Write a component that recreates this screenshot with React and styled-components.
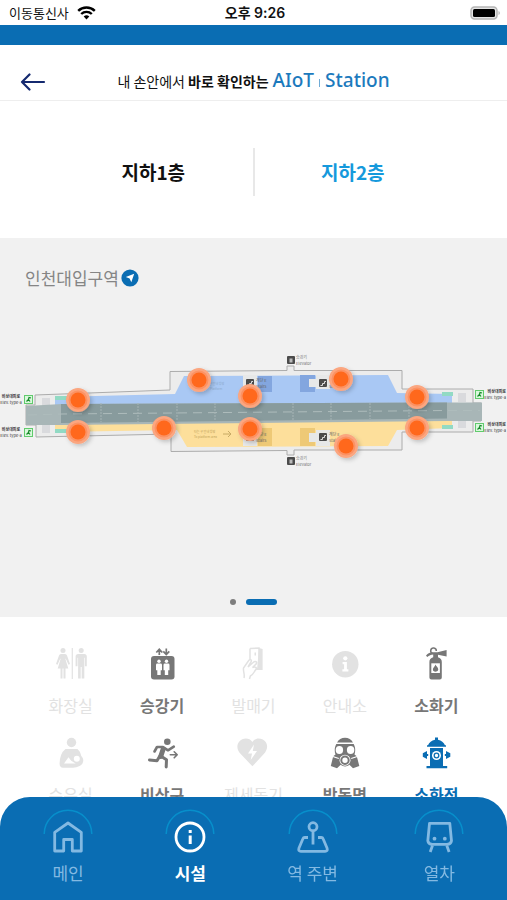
import React, { useState } from "react";
import styled, { createGlobalStyle } from "styled-components";

const colors = {
  brand: "#0a6db3",
  sky: "#1599dc",
  ink: "#111111",
  gray: "#777777",
  faint: "#e2e2e2",
  panel: "#f1f1f1",
  navMuted: "#83b9e2",
};

const GlobalStyle = createGlobalStyle`
  *, *::before, *::after { box-sizing: border-box; }
  body {
    margin: 0;
    background: #ffffff;
    color: ${colors.ink};
    font-family: "Noto Sans", "Noto Sans CJK KR", sans-serif;
  }
  button {
    border: 0;
    padding: 0;
    background: none;
    color: inherit;
    font: inherit;
    cursor: pointer;
  }
  svg { display: block; }
`;

const Screen = styled.div`
  display: flex;
  flex-direction: column;
  min-height: 100vh;
`;

const StatusBar = styled.div`
  display: grid;
  grid-template-columns: 1fr auto 1fr;
  align-items: center;
  height: 25px;
  padding: 0 6px 0 9px;
  font-family: Inter, "Noto Sans CJK KR", sans-serif;
  font-size: 13px;
  line-height: 20px;
`;

const Carrier = styled.div`
  display: flex;
  align-items: center;
  gap: 8px;
`;

const Clock = styled.time`
  font-size: 14px;
  font-weight: 600;
`;

const Battery = styled.div`
  justify-self: end;
`;

const BrandStrip = styled.div`
  height: 20px;
  background: ${colors.brand};
`;

const Header = styled.header`
  display: grid;
  grid-template-columns: 28px 1fr 28px;
  align-items: center;
  height: 56px;
  padding: 16px 19px 0;
  border-bottom: 1px solid #eeeeee;
`;

const Title = styled.h1`
  display: flex;
  justify-content: center;
  align-items: baseline;
  gap: 4px;
  margin: 0;
  font-family: "Noto Sans CJK KR", sans-serif;
  font-size: 14px;
  font-weight: 400;
  line-height: 24px;
  white-space: nowrap;
`;

const Brand = styled.span`
  display: flex;
  align-items: baseline;
  gap: 5px;
  color: #1c7abd;
  font-family: "Noto Sans", sans-serif;
  font-size: 19px;
  font-weight: 500;
`;

const BrandRule = styled.span`
  width: 1px;
  height: 8px;
  background: #6fabd6;
`;

const Floors = styled.div`
  display: grid;
  grid-template-columns: 1fr 1fr;
  padding: 47px 56px 42px 54px;
`;

const Floor = styled.button`
  height: 48px;
  color: ${(p) => (p.$active ? colors.sky : colors.ink)};
  font-family: "Noto Sans CJK KR", sans-serif;
  font-size: 19px;
  font-weight: 700;
  line-height: 24px;

  & + & {
    border-left: 2px solid #e8e8e8;
  }
`;

const MapPanel = styled.section`
  display: flex;
  flex-direction: column;
  padding: 28px 0 12px;
  background: ${colors.panel};
`;

const StationName = styled.h2`
  display: flex;
  align-items: center;
  gap: 2px;
  margin: 0 25px 55px;
  color: #858585;
  font-family: "Noto Sans CJK KR", sans-serif;
  font-size: 17px;
  font-weight: 400;
  line-height: 24px;
`;

const PlanDrawing = styled.svg`
  width: 100%;
  height: auto;
  margin-bottom: 124px;
`;

const Pager = styled.div`
  display: flex;
  justify-content: center;
  align-items: center;
  gap: 10px;
`;

const PagerDot = styled.button`
  width: ${(p) => (p.$active ? 31 : 6)}px;
  height: 6px;
  border-radius: 3px;
  background: ${(p) => (p.$active ? colors.brand : "#7d7d7d")};
`;

const Facilities = styled.section`
  display: grid;
  grid-template-columns: repeat(5, 1fr);
  row-gap: 15px;
  padding: 27px 25px 72px;
`;

const facilityColor = { faint: colors.faint, on: colors.gray, selected: colors.brand };

const Facility = styled.button`
  display: flex;
  flex-direction: column;
  align-items: center;
  gap: 8px;
  color: ${(p) => facilityColor[p.$state]};
  font-family: "Noto Sans CJK KR", sans-serif;
  font-size: 16px;
  font-weight: ${(p) => (p.$state === "faint" ? 400 : 700)};
  line-height: 26px;
`;

const Nav = styled.nav`
  position: fixed;
  right: 0;
  bottom: 0;
  left: 0;
  display: grid;
  grid-template-columns: repeat(3, 122fr) 131fr;
  height: 103px;
  padding: 12px 2px 0 7px;
  border-radius: 30px 30px 0 0;
  background: ${colors.brand};
`;

const NavItem = styled.button`
  display: flex;
  flex-direction: column;
  align-items: center;
  gap: 4px;
  height: 78px;
  color: ${(p) => (p.$active ? "#ffffff" : colors.navMuted)};
  font-family: "Noto Sans CJK KR", sans-serif;
  font-size: 17px;
  font-weight: ${(p) => (p.$active ? 700 : 400)};
  line-height: 24px;
`;

const WifiIcon = () => (
  <svg width="19" height="14" viewBox="0 0 19 14" fill="none" stroke="#000" strokeWidth="2.4">
    <path d="M1.2 4.9a11.8 11.8 0 0 1 16.6 0" />
    <path d="M4.2 8a7.6 7.6 0 0 1 10.6 0" />
    <path d="M9.5 13.6 6.7 10.6a4 4 0 0 1 5.6 0z" fill="#000" stroke="none" />
  </svg>
);

const BatteryIcon = () => (
  <svg width="31" height="14" viewBox="0 0 31 14">
    <rect x="1" y="1" width="26" height="12" rx="3.5" fill="#e4e4e4" stroke="#b5b5b5" strokeWidth="1.5" />
    <rect x="3" y="3" width="22" height="8" rx="1.5" fill="#000" />
    <path d="M28.500 5c1.800.6 1.800 3.400 0 4z" fill="#b5b5b5" />
  </svg>
);

const BackIcon = () => (
  <svg width="28" height="20" viewBox="0 0 28 20" fill="none" stroke="#14296f" strokeWidth="2.200" strokeLinecap="round" strokeLinejoin="round">
    <path d="M25 11H3M10.500 3.500 3 11l7.500 7.500" />
  </svg>
);

const LocateIcon = () => (
  <svg width="18" height="18" viewBox="0 0 18 18">
    <circle cx="9" cy="9" r="8.600" fill={colors.brand} />
    <path d="M13.200 4.800 10.300 13.200 8.600 9.500 4.800 7.900z" fill="#fff" />
  </svg>
);

const Glyph = ({ children }) => (
  <svg width="40" height="40" viewBox="0 0 40 40" fill="currentColor" aria-hidden="true">
    {children}
  </svg>
);

const glyphs = {
  restroom: (
    <Glyph>
      <circle cx="12" cy="6.600" r="2.500" />
      <path d="M10 10h4q1.500 0 2 1.600l3 8.400-1.500.7-2.800-6.200-.3.500 2.900 9.600h-2.800V34.500h-2V24.600h-1V34.500h-2V24.600H6.700l2.900-9.600-.3-.5-2.800 6.200-1.500-.7 3-8.400Q8.500 10 10 10z" />
      <path d="M20.700 4h1.200v31h-1.200z" />
      <circle cx="30.200" cy="6.600" r="2.500" />
      <path d="M27.200 10h6q2.600 0 2.600 2.600v9.600h-1.900v-8.400h-.6V34.500h-2.600V23h-1v11.500h-2.600V13.800h-.6v8.400h-1.900v-9.600Q24.600 10 27.200 10z" />
    </Glyph>
  ),
  elevator: (
    <Glyph>
      <path d="M17.300 11V5.500m-3 3 3-3.200 3 3.200M24.300 4.500v5.800m-3-3 3 3.200 3-3.200" fill="none" stroke="currentColor" strokeWidth="1.700" />
      <rect x="9" y="12" width="23.500" height="23.500" rx="3" />
      <g fill="#fff">
        <circle cx="17" cy="17.300" r="1.700" />
        <path d="M15.300 19.600h3.400q1.300 0 1.300 1.300v5.300h-1.300V31h-3.400v-4.800H14v-5.300q0-1.300 1.300-1.300z" />
        <circle cx="24.500" cy="17.300" r="1.700" />
        <path d="M22.800 19.600h3.400q1.300 0 1.300 1.300v5.300h-1.300V31h-3.400v-4.800h-1.300v-5.300q0-1.300 1.300-1.300z" />
      </g>
    </Glyph>
  ),
  ticket: (
    <Glyph>
      <path d="M17 4.500 26 4v20l-3 1.500M17 4.500V15M11 34c1-4-1-6-.5-10l5.200-7.500c2-2 3.300-.3 2.300 1.500l-3 5 6-5.200c2.400-1 3.400.9 2 2.300l-3.500 3.400c3.500-1.500 4.500.6 3.300 2-2 2.600-2.500 5.500-5.500 6.500l-.8 3" fill="none" stroke="currentColor" strokeWidth="1.500" />
      <path d="m26 4 3.600 1v21L24 26z" />
      <path d="M21.500 8.500h1.500v3h-1.500z" />
    </Glyph>
  ),
  info: (
    <Glyph>
      <circle cx="20.300" cy="20.200" r="13.200" />
      <g fill="#fff">
        <circle cx="20.300" cy="14.300" r="2.100" />
        <path d="M17.600 18h4.300v7.300h1.500v2.200h-6v-2.200h1.700v-5h-1.500z" />
      </g>
    </Glyph>
  ),
  extinguisher: (
    <Glyph>
      <path d="M16.800 9.500a2.800 2.800 0 1 1 3.500-2.500" fill="none" stroke="currentColor" strokeWidth="1.500" />
      <path d="M10 11.500c2-2.500 4-3.300 7-3.300h4.500L30.600 6v6.500l-8.600-1.800v2.600c2.500.7 3.800 2.300 3.800 4.700v15.500q0 2-2 2h-8.400q-2 0-2-2V18c0-2.400 1.300-4 3.800-4.700v-2.800c-2.300.1-3.900.9-6 2.500z" />
      <path d="M15.300 19.300h8.600v9.700h-8.600z" fill="#fff" />
      <path d="M19.600 20.600c.3 2 2.700 2.600 2.700 5q0 2.100-2.700 2.100t-2.700-2.100c0-1.800 1.700-2.500 2.700-5z" />
    </Glyph>
  ),
  nursing: (
    <Glyph>
      <circle cx="20.500" cy="9.500" r="4.700" />
      <path d="M14.500 16h12q3.500 3 3.800 7a6 6 0 0 1-1.800 10q-3 1.800-6.500 1.800H12q-3.600-.4-3.400-4.500.3-10 5.900-14.300z" />
      <path d="m13 30.500 4.500-6.300 2.700 3.500 4.500 2.800z" fill="#fff" />
      <circle cx="25.800" cy="25.800" r="3" fill="#fff" />
    </Glyph>
  ),
  exit: (
    <Glyph>
      <circle cx="25.300" cy="8.700" r="3.300" />
      <g fill="none" stroke="currentColor" strokeLinecap="round" strokeLinejoin="round">
        <path d="M12.500 18.500 15 14h6l5 3.300 5.800-3.600" strokeWidth="2.600" />
        <path d="m21.200 16-2.500 7.500" strokeWidth="5" />
        <path d="m19.500 23.500 5 3.300-.3 7.200M17.500 23.500l-2.500 4.300-7.500-.8" strokeWidth="3" />
        <path d="M28.300 21.800H35m-2.800-3 3 3-3 3" strokeWidth="1.600" />
      </g>
    </Glyph>
  ),
  aed: (
    <Glyph>
      <path d="M19.400 9C22 4.300 29 4.500 32.300 8.500c3.200 4 1.800 9-1.300 12.300L19.400 33.300 7.500 20.800C4.300 17.500 3 12.500 6.300 8.500 9.500 4.500 16.500 4.300 19.400 9z" />
      <path d="m21 11.500-6 9h4l-1.300 6.500 6.300-9h-4.200z" fill="#fff" />
    </Glyph>
  ),
  mask: (
    <Glyph>
      <path d="M12 9.500C13.500 6.500 16.500 4.700 20 4.700s6.500 1.800 8 4.800z" />
      <path d="M11.300 11h17.400c1.700 3 2 7 .8 10.500l2.300 1.700 2.500 9.800-6.300 2.300-3.600-3.500c-2.700 2.200-6 2.200-8.700 0L12 35.300 5.800 33l2.400-9.800 2.300-1.700C9.200 18 9.600 14 11.300 11z" />
      <g fill="#fff">
        <ellipse cx="14.400" cy="17" rx="3.700" ry="3.900" />
        <ellipse cx="25.600" cy="17" rx="3.700" ry="3.900" />
        <circle cx="20" cy="27.200" r="5.500" />
        <path d="m8 23 6 2-.4 1L7.600 24zM32 23l-6 2 .4 1 6-2z" />
      </g>
      <circle cx="20" cy="27.200" r="3.700" fill="none" stroke="currentColor" strokeWidth="2" />
    </Glyph>
  ),
  hydrant: (
    <Glyph>
      <path d="M19 4.500h3v2.200c3.500.8 5.700 2.600 7 5.600h1v1.500H11v-1.500h1c1.300-3 3.500-4.800 7-5.600zM14 15h13v18H14zM10.500 33h20.700v2.200H10.500zM6.800 20.300 11 18v8l-4.200-2.300zM11 21h1.200v2H11zM34.300 20.300 30 18v8l4.300-2.300zM28.800 21H30v2h-1.200z" />
      <circle cx="20.500" cy="22.500" r="4.500" fill="#fff" />
      <circle cx="20.500" cy="22.500" r="2.300" fill="none" stroke="currentColor" strokeWidth="1.300" />
    </Glyph>
  ),
};

const NavGlyph = ({ children }) => (
  <svg width="50" height="48" viewBox="0 0 50 48" fill="none" aria-hidden="true">
    <path d="M1.200 25a23.800 23.800 0 0 1 47.600 0" stroke="#078fcb" strokeWidth="1.500" />
    <g stroke="currentColor" strokeWidth="2.800" strokeLinejoin="round">{children}</g>
  </svg>
);

const navGlyphs = {
  home: (
    <NavGlyph>
      <path d="M11.700 42V23.300L25 14l13.300 9.300V42h-9V30.500h-8.600V42z" />
    </NavGlyph>
  ),
  facility: (
    <NavGlyph>
      <circle cx="25" cy="28" r="14" />
      <path d="M25.200 26.500V35M25.200 21v3" strokeWidth="3" />
    </NavGlyph>
  ),
  around: (
    <NavGlyph>
      <circle cx="25" cy="17.700" r="4" />
      <path d="M25 21.700V35.500M20 28.500h-3.300q-1.300 0-1.800 1.300l-4 9.500q-.9 3 2 3h24.200q2.900 0 2-3l-4-9.500q-.5-1.300-1.800-1.300H30" />
    </NavGlyph>
  ),
  train: (
    <NavGlyph>
      <path d="M15.500 14.300h20.300l1.700 17.500q-.5 3.500-4.500 3.500H18.300q-4 0-4.500-3.500z" />
      <path d="m18.500 36.500-2.300 6.500M32.800 36.500l2.300 6.500" />
      <g fill="currentColor" stroke="none">
        <circle cx="20.500" cy="29.700" r="1.900" />
        <circle cx="30.800" cy="29.700" r="1.900" />
      </g>
    </NavGlyph>
  ),
};

const hydrants = [
  [199, 380], [341, 379], [78, 400], [250, 396], [417, 397],
  [78, 432], [164, 428], [250, 429], [417, 428], [346, 446],
];

const exits = [
  { x: 24, y: 395, label: 11, anchor: "middle" },
  { x: 24, y: 428, label: 11, anchor: "middle" },
  { x: 475, y: 390, label: 506, anchor: "end" },
  { x: 475, y: 423, label: 506, anchor: "end" },
];

const lifts = [[287, 356], [287, 457]];
const stairs = [[246, 379], [319, 379], [246, 433], [319, 433]];

const StationPlan = () => (
  <PlanDrawing viewBox="0 345 507 130" role="img" aria-label="인천대입구역 지하2층 소화전 위치" fontFamily="Noto Sans CJK KR, sans-serif">
    <defs>
      <filter id="pinShadow" x="-50%" y="-50%" width="200%" height="200%">
        <feDropShadow dx="2" dy="2" stdDeviation="2" floodColor="#000" floodOpacity="0.200" />
      </filter>
    </defs>
    <path
      d="M26 405H35V395L170 390V371.500L287 370.500V366H294V370.500H402V389H473V403H481V421H473V432H402V450H294V455H287V450.500L171 451.500V434L36 437V425H26Z"
      fill="#ececec" stroke="#acacac" strokeWidth="1"
    />
    <path d="M42 398h8v9h-8zM42 424h8v9h-8zM458 393h8v9h-8zM458 420h8v8h-8z" fill="#d9dadd" />
    <path d="M55 397 175 394 184 376 388 375 397 393 452 394V404L55 406Z" fill="#a9c8f4" />
    <path d="M55 422 452 418V428L397 430 388 446 187 447 177 430 55 432Z" fill="#fddf9b" />
    <path d="M55 396h13v4H55zM55 429h13v4H55zM442 392h11v4h-11zM442 425h11v4h-11z" fill="#92dac4" />
    <path d="M26 406 62 404 447 402.500H482V421H447L62 425 26 425Z" fill="#a8b6b7" />
    <path d="M61 404 447 402.500V418.500L61 423Z" fill="#889b9d" />
    <path d="M28 415 62 414 447 410.500H480" fill="none" stroke="#aebcbc" strokeWidth="1" strokeDasharray="9 6" />
    <path d="M101 403v19M138 403v19M177 403v18M215 403v18M293 403v17M331 403v17M370 403v16M409 403v16" stroke="#a6b4b5" strokeWidth="1" strokeDasharray="2 1" />
    <path d="M258 376h14v16h-14zM300 375h15v17h-15z" fill="#83a6df" />
    <path d="M258 428h14v18h-14zM300 428h15v18h-15z" fill="#eec976" />
    <path d="M309 379h8v8h-8zM243 375h14v13h-14zM316 375h14v14h-14zM309 433h8v9h-8zM243 431h14v15h-14zM316 430h14v16h-14z" fill="#e7e8e8" />
    <g fill="#8da9ce" fontSize="3">
      <text x="203" y="385">타는 곳 안내 방향</text>
      <text x="210" y="390">Platform</text>
    </g>
    <g fill="#c3a35a" fontSize="3">
      <text x="194" y="433">타는 곳 안내 방향</text>
      <text x="194" y="438">To platform area</text>
    </g>
    <path d="M223 434h8m-3-3 3 3-3 3" fill="none" stroke="#c8aa65" strokeWidth="1" />
    {lifts.map(([x, y]) => (
      <g key={y}>
        <rect x={x} y={y} width="8" height="8" rx="1" fill="#4b4b4b" />
        <path d={`M${x + 2.5} ${y + 2.5}h3v4h-3z`} fill="#bbb" />
        <text x={x + 9} y={y + 3} fontSize="4" fill="#777">승강기</text>
        <text x={x + 9} y={y + 9} fontSize="4" fill="#777">Elevator</text>
      </g>
    ))}
    {stairs.map(([x, y]) => (
      <g key={`${x}-${y}`}>
        <rect x={x} y={y} width="8" height="8" rx="1" fill="#4b4b4b" />
        <path d={`M${x + 1.5} ${y + 6.5}h2v-2h2v-2h1.500`} fill="none" stroke="#ddd" strokeWidth="1" />
        <text x={x + 10} y={y + 3} fontSize="4" fill="#666">계단 E</text>
        <text x={x + 10} y={y + 9} fontSize="4" fill="#666">Stairs</text>
      </g>
    ))}
    {exits.map(({ x, y, label, anchor }) => (
      <g key={`${x}-${y}`}>
        <rect x={x + 0.5} y={y + 0.5} width="8" height="8" fill="#d9f8dc" stroke="#61cb6d" strokeWidth="1" />
        <path d={`M${x + 2.5} ${y + 6.5}l2-2 .5-2 2 .5m-2.500 1.500 1.500 2`} fill="none" stroke="#168928" strokeWidth="1.200" />
        <text x={label} y={y + 3} fontSize="4" fontWeight="700" textAnchor={anchor} fill="#333">비상대피로</text>
        <text x={label} y={y + 9} fontSize="4" textAnchor={anchor} fill="#333">Elev. type-a</text>
      </g>
    ))}
    {hydrants.map(([x, y]) => (
      <g key={`${x}-${y}`} filter="url(#pinShadow)">
        <circle cx={x} cy={y} r="12" fill="#fba680" />
        <circle cx={x} cy={y} r="9.500" fill="#fc9263" />
        <circle cx={x} cy={y} r="7.500" fill="#ff681c" />
      </g>
    ))}
  </PlanDrawing>
);

const facilities = [
  { id: "restroom", label: "화장실", available: false },
  { id: "elevator", label: "승강기", available: true },
  { id: "ticket", label: "발매기", available: false },
  { id: "info", label: "안내소", available: false },
  { id: "extinguisher", label: "소화기", available: true },
  { id: "nursing", label: "수유실", available: false },
  { id: "exit", label: "비상구", available: true },
  { id: "aed", label: "제세동기", available: false },
  { id: "mask", label: "방독면", available: true },
  { id: "hydrant", label: "소화전", available: true },
];

const navItems = [
  { id: "home", label: "메인" },
  { id: "facility", label: "시설" },
  { id: "around", label: "역 주변" },
  { id: "train", label: "열차" },
];

const floors = ["지하1층", "지하2층"];

export default function App() {
  const [floor, setFloor] = useState(1);
  const [selected, setSelected] = useState("hydrant");
  const [tab, setTab] = useState("facility");

  const stateOf = ({ id, available }) => {
    if (!available) return "faint";
    return id === selected ? "selected" : "on";
  };

  return (
    <Screen>
      <GlobalStyle />
      <StatusBar>
        <Carrier>이동통신사 <WifiIcon /></Carrier>
        <Clock>오후 9:26</Clock>
        <Battery><BatteryIcon /></Battery>
      </StatusBar>
      <BrandStrip />
      <Header>
        <button type="button" aria-label="뒤로"><BackIcon /></button>
        <Title>
          <span>내 손안에서 <b>바로 확인하는</b></span>
          <Brand>AIoT <BrandRule /> Station</Brand>
        </Title>
      </Header>
      <main>
        <Floors>
          {floors.map((name, i) => (
            <Floor key={name} type="button" $active={i === floor} aria-pressed={i === floor} onClick={() => setFloor(i)}>
              {name}
            </Floor>
          ))}
        </Floors>
        <MapPanel>
          <StationName>
            인천대입구역
            <button type="button" aria-label="현재 위치"><LocateIcon /></button>
          </StationName>
          <StationPlan />
          <Pager>
            {floors.map((name, i) => (
              <PagerDot key={name} type="button" $active={i === floor} aria-label={name} onClick={() => setFloor(i)} />
            ))}
          </Pager>
        </MapPanel>
        <Facilities>
          {facilities.map((item) => (
            <Facility
              key={item.id}
              type="button"
              disabled={!item.available}
              $state={stateOf(item)}
              onClick={() => setSelected(item.id)}
            >
              {glyphs[item.id]}
              {item.label}
            </Facility>
          ))}
        </Facilities>
      </main>
      <Nav>
        {navItems.map((item) => (
          <NavItem key={item.id} type="button" $active={item.id === tab} onClick={() => setTab(item.id)}>
            {navGlyphs[item.id]}
            {item.label}
          </NavItem>
        ))}
      </Nav>
    </Screen>
  );
}
